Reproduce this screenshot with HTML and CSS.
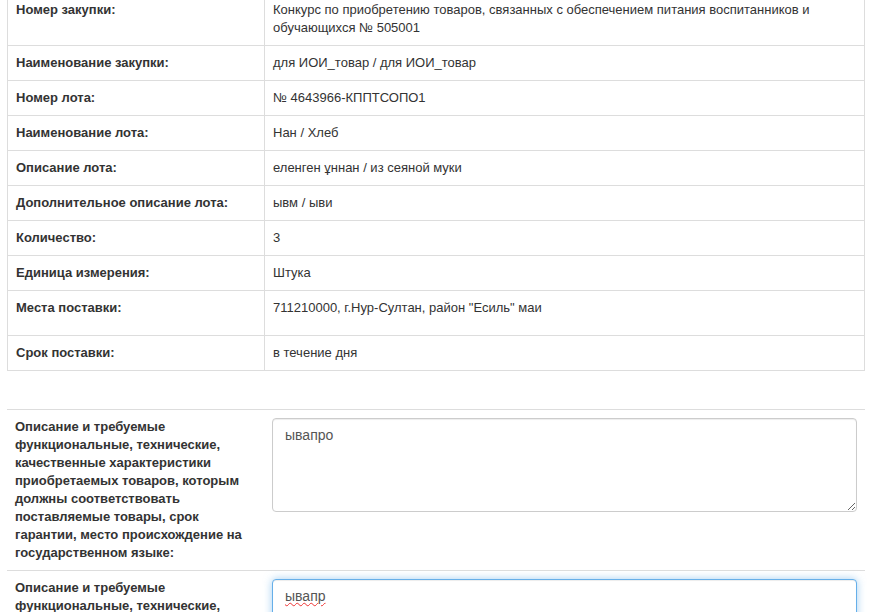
FILE: index.html
```html
<!DOCTYPE html>
<html lang="ru">
  <head>
    <meta charset="UTF-8" />
    <meta name="viewport" content="width=device-width, initial-scale=1.0" />
    <title>Лот</title>
    <link rel="stylesheet" href="styles.css">
  </head>
  <body>
    <table class="lot-table">
      <tr>
        <th>Номер закупки:</th>
        <td>Конкурс по приобретению товаров, связанных с обеспечением питания воспитанников и обучающихся № 505001</td>
      </tr>
      <tr>
        <th>Наименование закупки:</th>
        <td>для ИОИ_товар / для ИОИ_товар</td>
      </tr>
      <tr>
        <th>Номер лота:</th>
        <td>№ 4643966-КППТСОПО1</td>
      </tr>
      <tr>
        <th>Наименование лота:</th>
        <td>Нан / Хлеб</td>
      </tr>
      <tr>
        <th>Описание лота:</th>
        <td>еленген ұннан / из сеяной муки</td>
      </tr>
      <tr>
        <th>Дополнительное описание лота:</th>
        <td>ывм / ыви</td>
      </tr>
      <tr>
        <th>Количество:</th>
        <td>3</td>
      </tr>
      <tr>
        <th>Единица измерения:</th>
        <td>Штука</td>
      </tr>
      <tr class="row-tall">
        <th>Места поставки:</th>
        <td>711210000, г.Нур-Султан, район "Есиль" маи</td>
      </tr>
      <tr>
        <th>Срок поставки:</th>
        <td>в течение дня</td>
      </tr>
    </table>

    <div class="form-row">
      <label class="form-label" for="desc-kz">Описание и требуемые функциональные, технические, качественные характеристики приобретаемых товаров, которым должны соответствовать поставляемые товары, срок гарантии, место происхождение на государственном языке:</label>
      <div class="form-field">
        <textarea id="desc-kz" class="form-control" rows="4">ывапро</textarea>
      </div>
    </div>
    <div class="form-row">
      <label class="form-label" for="desc-ru">Описание и требуемые функциональные, технические, качественные характеристики приобретаемых товаров, которым должны соответствовать поставляемые товары, срок гарантии, место происхождение на русском языке:</label>
      <div class="form-field">
        <textarea id="desc-ru" class="form-control form-control-focus" rows="4">ывапр</textarea>
      </div>
    </div>
  </body>
</html>
```

FILE: styles.css
```css
body {
  font-family: "Liberation Sans", Arial, sans-serif;
  font-size: 13px;
  line-height: 18px;
  color: #333;
  margin: 0;
  padding: 0 7px;
  background: #fff;
}
.lot-table {
  width: 100%;
  margin-top: -8px;
  margin-bottom: 38px;
  border-collapse: collapse;
  border: 1px solid #ddd;
}
.lot-table th,
.lot-table td {
  padding: 8px;
  border: 1px solid #ddd;
  text-align: left;
  vertical-align: top;
}
.lot-table th {
  width: 240px;
  font-weight: bold;
}
.row-tall td {
  height: 28px;
}
.form-row {
  display: grid;
  grid-template-columns: 257px 1fr;
  border-top: 1px solid #ddd;
}
.form-label {
  padding: 8px;
  font-weight: bold;
}
.form-field {
  padding: 8px;
}
.form-control {
  display: block;
  box-sizing: border-box;
  width: 100%;
  height: 94px;
  padding: 6px 12px;
  font-family: "Liberation Sans", Arial, sans-serif;
  font-size: 14px;
  line-height: 20px;
  color: #555;
  background-color: #fff;
  border: 1px solid #ccc;
  border-radius: 4px;
  box-shadow: inset 0 1px 1px rgba(0, 0, 0, 0.075);
  resize: vertical;
}
.form-control-focus {
  border-color: #66afe9;
  outline: 0;
  box-shadow: inset 0 1px 1px rgba(0, 0, 0, 0.075), 0 0 8px rgba(102, 175, 233, 0.6);
  text-decoration: underline wavy #e33;
  text-decoration-thickness: 1px;
}
```
